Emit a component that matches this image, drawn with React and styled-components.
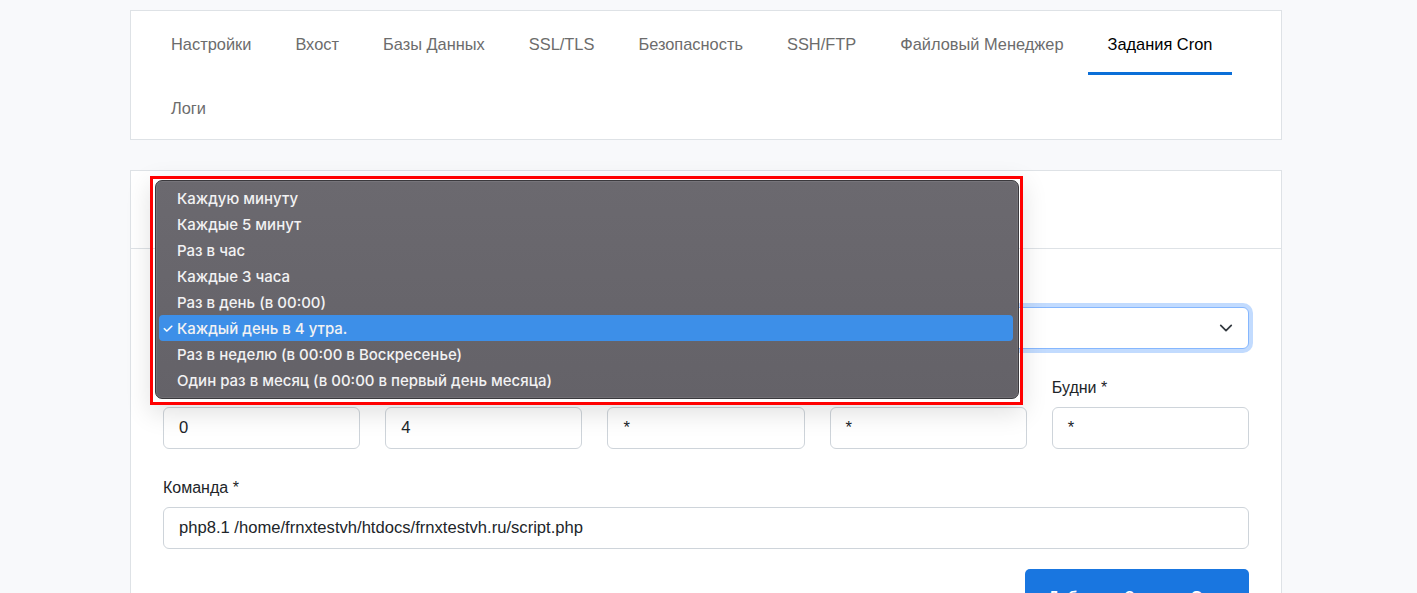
import styled, { createGlobalStyle } from 'styled-components'

const GlobalStyle = createGlobalStyle`
    html, body {
        margin: 0;
        padding: 0;
        background: #f8f9fb;
        font-family: "Liberation Sans", Arial, sans-serif;
        color: #212529;
    }
    * { box-sizing: border-box; }
`

const Page = styled.div`
    width: 1152px;
    margin: 10px 0 0 130px;
    display: flex;
    flex-direction: column;
    gap: 30px;
`

const Card = styled.div`
    background: #fff;
    border: 1px solid #dee2e6;
    position: relative;
`

const TabBar = styled.nav`
    display: flex;
    flex-wrap: wrap;
    column-gap: 4px;
    padding: 0 20px;
`

const Tab = styled.div`
    height: 64px;
    padding: 5px 20px 0;
    display: flex;
    align-items: center;
    font-size: 16.4px;
    color: ${p => (p.$active ? '#000' : '#6c6c6c')};
    border-bottom: 3px solid ${p => (p.$active ? '#0b6fd8' : 'transparent')};
`

const CardHeader = styled.div`
    height: 78px;
    border-bottom: 1px solid #dee2e6;
    display: flex;
    align-items: center;
    padding: 0 32px;
    font-size: 20px;
    font-weight: bold;
`

const CardBody = styled.div`
    padding: 27px 32px 0;
    display: flex;
    flex-direction: column;
    gap: 27px;
`

const Group = styled.div`
    display: flex;
    flex-direction: column;
    gap: 7px;
`

const Label = styled.label`
    font-size: 16px;
    line-height: 24px;
    color: #212529;
`

const Input = styled.div`
    height: 42px;
    border: 1px solid #ced4da;
    border-radius: 6px;
    padding: 0 15px;
    display: flex;
    align-items: center;
    font-size: 16.6px;
    color: #212529;
    background: #fff;
`

const Select = styled(Input)`
    justify-content: space-between;
    border-color: #86b7fe;
    box-shadow: 0 0 0 4px rgba(13, 110, 253, 0.25);
`

const Row = styled.div`
    display: grid;
    grid-template-columns: repeat(5, 1fr);
    column-gap: 25px;
`

const Actions = styled.div`
    display: flex;
    justify-content: flex-end;
    margin-top: -7px;
`

const Button = styled.button`
    width: 224px;
    height: 52px;
    border: none;
    border-radius: 5px;
    background: #1976e0;
    color: #fff;
    font-family: "Liberation Sans", Arial, sans-serif;
    font-weight: bold;
    font-size: 15px;
`

const Highlight = styled.div`
    position: absolute;
    left: 19px;
    top: 5px;
    width: 873px;
    height: 229px;
    border: 3px solid #ff0000;
    padding: 1px 1px 3px 2px;
    box-shadow: 0 8px 24px rgba(0, 0, 0, 0.12);
`

const Menu = styled.ul`
    margin: 0;
    height: 100%;
    list-style: none;
    padding: 4px 5px 6px 3px;
    border-radius: 7px;
    border: 1px solid #3a393d;
    background: linear-gradient(#6b696f, #646268);
    box-shadow: inset 0 0 0 1px rgba(255, 255, 255, 0.08);
    font-family: Inter, "Open Sans", sans-serif;
`

const Item = styled.li`
    height: 26px;
    border-radius: 4px;
    display: flex;
    align-items: center;
    padding-left: 18px;
    position: relative;
    font-size: 15px;
    font-weight: 500;
    color: #f2f2f3;
    background: ${p => (p.$selected ? '#3d8fe8' : 'transparent')};
`

const Check = styled.span`
    position: absolute;
    left: 3px;
    font-size: 13px;
    color: #fff;
`

const tabs = ['Настройки', 'Вхост', 'Базы Данных', 'SSL/TLS', 'Безопасность', 'SSH/FTP', 'Файловый Менеджер', 'Задания Cron', 'Логи']

const options = [
    'Каждую минуту',
    'Каждые 5 минут',
    'Раз в час',
    'Каждые 3 часа',
    'Раз в день (в 00:00)',
    'Каждый день в 4 утра.',
    'Раз в неделю (в 00:00 в Воскресенье)',
    'Один раз в месяц (в 00:00 в первый день месяца)',
]

const fields = [
    ['Минута *', '0'],
    ['Час *', '4'],
    ['День *', '*'],
    ['Месяц *', '*'],
    ['Будни *', '*'],
]

export default function App() {
    return (
        <>
            <GlobalStyle />
            <Page>
                <Card>
                    <TabBar>
                        {tabs.map(t => (
                            <Tab key={t} $active={t === 'Задания Cron'}>{t}</Tab>
                        ))}
                    </TabBar>
                </Card>
                <Card>
                    <CardHeader>Добавить Задание Cron</CardHeader>
                    <CardBody>
                        <Group>
                            <Label>Расписание</Label>
                            <Select>
                                <span>Каждый день в 4 утра.</span>
                                <svg width="14" height="14" viewBox="0 0 16 16" fill="none" stroke="#343a40" strokeWidth="2" strokeLinecap="round" strokeLinejoin="round">
                                    <path d="M2 5l6 6 6-6" />
                                </svg>
                            </Select>
                        </Group>
                        <Row>
                            {fields.map(([l, v]) => (
                                <Group key={l}>
                                    <Label>{l}</Label>
                                    <Input>{v}</Input>
                                </Group>
                            ))}
                        </Row>
                        <Group>
                            <Label>Команда *</Label>
                            <Input>php8.1 /home/frnxtestvh/htdocs/frnxtestvh.ru/script.php</Input>
                        </Group>
                        <Actions>
                            <Button>Добавить Задание Cron</Button>
                        </Actions>
                    </CardBody>
                    <Highlight>
                        <Menu>
                            {options.map(o => (
                                <Item key={o} $selected={o === 'Каждый день в 4 утра.'}>
                                    {o === 'Каждый день в 4 утра.' && <Check>✓</Check>}
                                    {o}
                                </Item>
                            ))}
                        </Menu>
                    </Highlight>
                </Card>
            </Page>
        </>
    )
}
